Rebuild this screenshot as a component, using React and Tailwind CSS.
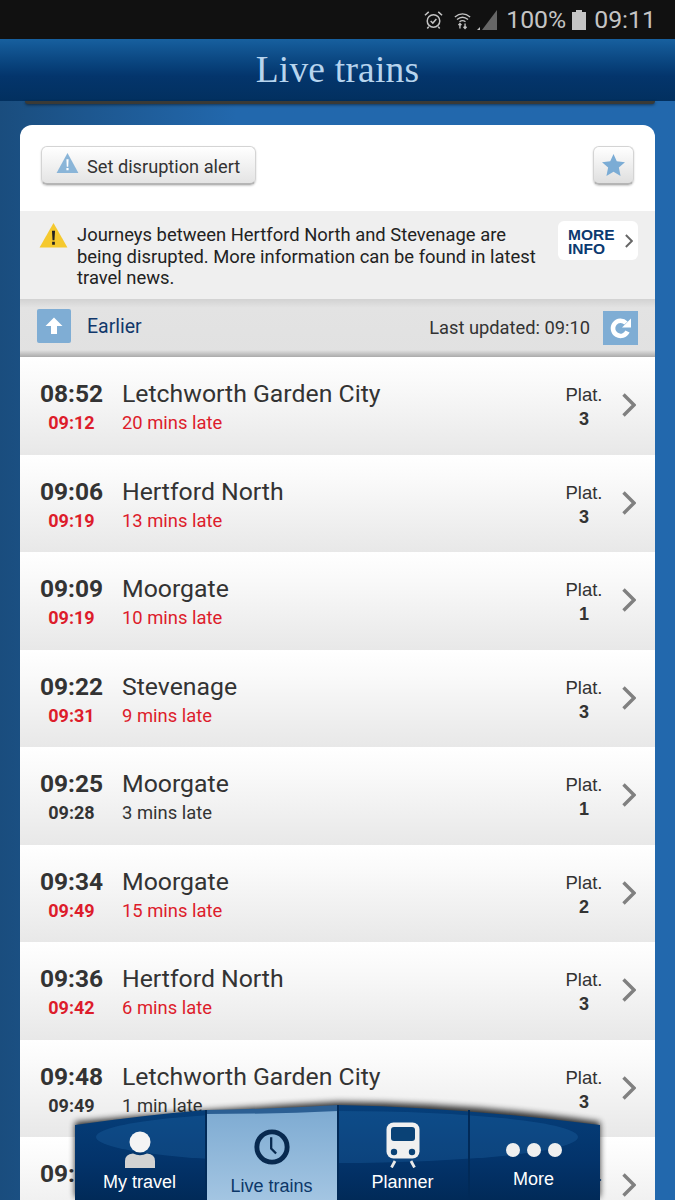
const TRAINS = [
  { sched: '08:52', exp: '09:12', dest: 'Letchworth Garden City', note: '20 mins late', plat: 3, red: true },
  { sched: '09:06', exp: '09:19', dest: 'Hertford North', note: '13 mins late', plat: 3, red: true },
  { sched: '09:09', exp: '09:19', dest: 'Moorgate', note: '10 mins late', plat: 1, red: true },
  { sched: '09:22', exp: '09:31', dest: 'Stevenage', note: '9 mins late', plat: 3, red: true },
  { sched: '09:25', exp: '09:28', dest: 'Moorgate', note: '3 mins late', plat: 1, red: false },
  { sched: '09:34', exp: '09:49', dest: 'Moorgate', note: '15 mins late', plat: 2, red: true },
  { sched: '09:36', exp: '09:42', dest: 'Hertford North', note: '6 mins late', plat: 3, red: true },
  { sched: '09:48', exp: '09:49', dest: 'Letchworth Garden City', note: '1 min late', plat: 3, red: false },
  { sched: '09:52', exp: '', dest: 'Moorgate', note: '', plat: '', red: false },
];

function Chevron({ className }) {
  return (
    <svg viewBox="0 0 14 24" className={className} fill="none" stroke="currentColor" strokeWidth="3.4">
      <path d="M1.5 1.5 L12 12 L1.5 22.5" />
    </svg>
  );
}

function StatusBar() {
  return (
    <div className="h-[39px] bg-[#111111] flex items-center justify-end pr-[19px] text-[#c4c4c4] text-[24.8px] font-['Roboto',sans-serif]">
      {/* alarm */}
      <svg viewBox="0 0 20 20" className="w-[19px] h-[20px] mr-[11px]" fill="none" stroke="currentColor" strokeWidth="1.6">
        <circle cx="10" cy="11" r="6.6" />
        <path d="M7 11 L9.3 13.2 L13 9" />
        <path d="M1 5 L5 1.5 M19 5 L15 1.5 M5 17 L3.5 19 M15 17 L16.5 19" />
      </svg>
      {/* wifi */}
      <svg viewBox="0 0 20 20" className="w-[17px] h-[20px] mr-[6px]" fill="none" stroke="currentColor" strokeWidth="1.6">
        <path d="M1 6.5 Q10 -1 19 6.5 M3.5 9.5 Q10 4 16.5 9.5 M6.5 12 Q10 9.5 13.5 12" />
        <path d="M7 14 V20 M5.2 16 L7 14 L8.8 16 M13 20 V14 M11.2 18 L13 20 L14.8 18" />
      </svg>
      {/* signal */}
      <svg viewBox="0 0 20 20" className="w-[20px] h-[20px] mr-[9px]">
        <path d="M20 0 V20 H5 Z" fill="#666666" />
        <path d="M0 20 L3 17 V20 Z" fill="#c4c4c4" />
      </svg>
      <span className="mr-[6px]">100%</span>
      <span className="w-[14px] h-[20px] mr-[8px] flex flex-col items-center">
        <span className="w-[6px] h-[2px] bg-[#c4c4c4]" />
        <span className="w-[14px] h-[18px] bg-[#c4c4c4]" />
      </span>
      <span>09:11</span>
    </div>
  );
}

function Toolbar() {
  return (
    <div className="h-[86px] flex items-center justify-between pl-[21px] pr-[21px] bg-white rounded-t-[12px]">
      <button className="w-[215px] h-[39px] mt-[-6px] pt-[5px] rounded-[6px] border border-[#d4d4d4] border-b-[2px] border-b-[#b5b5b5] bg-gradient-to-b from-white to-[#e4e4e4] flex items-center pl-[14px] gap-[8px] text-[18.2px] text-[#333333] shadow-[0_1px_2px_rgba(0,0,0,0.2)]">
        <svg viewBox="0 0 24 22" className="w-[23px] h-[20px] mt-[-9px]">
          <path d="M12 0 L24 22 H0 Z" fill="#8ab5d8" />
          <path d="M10.8 7 H13.2 L12.8 15 H11.2 Z M10.8 16.5 H13.2 V19 H10.8 Z" fill="#ffffff" />
        </svg>
        Set disruption alert
      </button>
      <button className="w-[41px] h-[39px] mt-[-6px] rounded-[6px] border border-[#d4d4d4] border-b-[2px] border-b-[#b5b5b5] bg-gradient-to-b from-white to-[#dfdfdf] flex items-center justify-center shadow-[0_1px_2px_rgba(0,0,0,0.2)]">
        <svg viewBox="0 0 24 23" className="w-[23px] h-[22px]">
          <path d="M12 0 L15.4 7.6 L24 8.6 L17.6 14.2 L19.4 23 L12 18.6 L4.6 23 L6.4 14.2 L0 8.6 L8.6 7.6 Z" fill="#7bacd5" />
        </svg>
      </button>
    </div>
  );
}

function Alert() {
  return (
    <div className="h-[88px] bg-[#efefef] relative flex pl-[19px] pt-[13px] pr-[17px]">
      <svg viewBox="0 0 30 26" className="w-[29px] h-[25px] shrink-0 mt-[-1px]">
        <path d="M15 0 L29.5 25.5 H0.5 Z" fill="#f5c92e" strokeLinejoin="round" />
        <path d="M13.4 8 H16.6 L16 18 H14 Z M13.6 19.5 H16.4 V22.5 H13.6 Z" fill="#222222" />
      </svg>
      <p className="ml-[9px] w-[466px] text-[18.4px] leading-[21.5px] text-[#222222] shrink-0">
        Journeys between Hertford North and Stevenage are being disrupted. More information can be found in latest travel news.
      </p>
      <div className="absolute right-[17px] top-[10px] w-[80px] h-[39px] bg-white rounded-[6px] flex items-center pl-[10px] justify-between pr-[5px]">
        <span className="font-['Liberation_Sans',sans-serif] font-bold text-[15.5px] leading-[14px] text-[#0b3a70] mt-[2px]">
          MORE<br />INFO
        </span>
        <Chevron className="w-[8px] h-[14px] text-[#666666]" />
      </div>
    </div>
  );
}

function UpdateBar() {
  return (
    <div className="h-[58px] bg-gradient-to-b from-[#d2d2d2] via-[#e3e3e3] via-[15%] to-[#e1e1e1] flex items-center pl-[17px] pr-[17px] relative">
      <span className="w-[34px] h-[34px] bg-[#7fadd4] rounded-[2px] flex items-center justify-center mt-[-4px]">
        <svg viewBox="0 0 18 18" className="w-[18px] h-[18px]">
          <path d="M9 0.5 L17.5 9 H12 V17 H6 V9 H0.5 Z" fill="#ffffff" strokeLinejoin="round" />
        </svg>
      </span>
      <span className="ml-[16px] text-[19.5px] text-[#12386b] mt-[-3px]">Earlier</span>
      <span className="ml-auto text-[18.3px] text-[#333333] mt-[-1px]">Last updated: 09:10</span>
      <span className="ml-[13px] w-[35px] h-[34px] bg-[#7fadd4] flex items-center justify-center">
        <svg viewBox="0 0 24 24" className="w-[24px] h-[24px]" fill="none">
          <path d="M18.5 15.5 A7.6 7.6 0 1 1 17 7" stroke="#ffffff" strokeWidth="4.6" />
          <path d="M22 2.5 V11.5 H13 Z" fill="#ffffff" />
        </svg>
      </span>
      <div className="absolute left-0 right-0 bottom-0 h-[7px] bg-gradient-to-b from-transparent to-[#aaaaaa]" />
    </div>
  );
}

function TrainRow({ t }) {
  const tone = t.red ? 'text-[#dd1c2b]' : 'text-[#333333]';
  return (
    <div className="h-[97.5px] bg-gradient-to-b from-white via-[#fafafa] via-[25%] to-[#e8e8e8] flex pl-[19px] pr-[19px] pt-[21px] text-[#333333]">
      <div className="w-[65px] flex flex-col items-center">
        <span className="text-[24.5px] leading-[32px] font-bold">{t.sched}</span>
        <span className={`text-[18px] leading-[24px] mt-[1px] font-bold ${tone}`}>{t.exp}</span>
      </div>
      <div className="ml-[18px] flex flex-col">
        <span className="text-[24.8px] leading-[32px]">{t.dest}</span>
        <span className={`text-[18.4px] leading-[24px] mt-[1px] ${tone}`}>{t.note}</span>
      </div>
      <div className="ml-auto w-[40px] flex flex-col items-center mt-[5px] mr-[18px] font-['Liberation_Sans',sans-serif]">
        <span className="text-[18.5px] leading-[24px]">Plat.</span>
        <span className="text-[18px] leading-[24px] font-bold">{t.plat}</span>
      </div>
      <Chevron className="w-[14px] h-[24px] mt-[15px] text-[#808080]" />
    </div>
  );
}

function NavBar() {
  const tab = "w-[131px] flex flex-col items-center font-['Liberation_Sans',sans-serif] text-[18px]";
  return (
    <div className="absolute left-[75px] bottom-0 w-[525px] h-[100px]">
      <svg viewBox="0 0 525 100" className="absolute inset-0 w-full h-full overflow-visible">
        <defs>
          <linearGradient id="navBlue" x1="0" y1="0" x2="0" y2="1">
            <stop offset="0" stopColor="#063f7a" />
            <stop offset="0.6" stopColor="#03336a" />
            <stop offset="1" stopColor="#012a58" />
          </linearGradient>
          <linearGradient id="navLight" x1="0" y1="0" x2="0" y2="1">
            <stop offset="0" stopColor="#7eabd2" />
            <stop offset="1" stopColor="#a3c5e2" />
          </linearGradient>
          <filter id="navShadow" x="-5%" y="-20%" width="110%" height="140%">
            <feGaussianBlur stdDeviation="3" />
          </filter>
        </defs>
        <path d="M0 25 Q130 12 263 5 Q400 6 525 25 V100 H0 Z" fill="#000000" opacity="0.8" transform="translate(0,-3)" filter="url(#navShadow)" />
        <path d="M0 25 Q70 15 131 10 V100 H0 Z M263 5 Q395 8 525 25 V100 H263 Z" fill="url(#navBlue)" />
        <ellipse cx="262" cy="37" rx="241" ry="26" fill="#2f7fc4" opacity="0.22" />
        <path d="M131 13 Q200 13 263 10 V100 H131 Z" fill="url(#navLight)" />
        <path d="M131 10 Q200 9 263 5 V11 Q200 14 131 14 Z" fill="#2c5f93" />
        <path d="M131 10 V100 M263 5 V100 M394 10 V100" stroke="#012a58" strokeWidth="2" />
      </svg>
      <div className="relative flex h-full">
        <div className={`${tab} pt-[31px] pr-[2px] text-white`}>
          <svg viewBox="0 0 32 37" className="w-[32px] h-[37px]">
            <circle cx="16" cy="11" r="10.5" fill="#f4f4f4" />
            <path d="M1 37 V30 Q1 23 9 22.5 Q16 26 23 22.5 Q31 23 31 30 V37 Z" fill="#d2d2d2" />
          </svg>
          <span className="mt-[1px]">My travel</span>
        </div>
        <div className={`${tab} pt-[29px] text-[#0c3768]`}>
          <svg viewBox="0 0 44 44" className="w-[44px] h-[44px]" fill="none">
            <circle cx="22" cy="22" r="18.5" stroke="#08294f" strokeWidth="6" />
            <path d="M21 10 V24 L27 30" stroke="#08294f" strokeWidth="2.8" />
          </svg>
          <span className="mt-[8px]">Live trains</span>
        </div>
        <div className={`${tab} pt-[22px] text-white`}>
          <svg viewBox="0 0 34 46" className="w-[34px] h-[46px]">
            <rect x="0.5" y="0.5" width="33" height="36" rx="7" fill="#f0f0f0" />
            <rect x="5" y="5" width="24" height="14" rx="3" fill="#0a4276" />
            <circle cx="8" cy="30" r="3.2" fill="#0a4276" />
            <circle cx="26" cy="30" r="3.2" fill="#0a4276" />
            <path d="M9 39 L5.5 45.5 M25 39 L28.5 45.5" stroke="#e8e8e8" strokeWidth="2.8" />
          </svg>
          <span className="mt-[1px]">Planner</span>
        </div>
        <div className={`${tab} pt-[43px] text-white`}>
          <div className="flex gap-[7px]">
            <span className="w-[14px] h-[14px] rounded-full bg-[#efefef]" />
            <span className="w-[14px] h-[14px] rounded-full bg-[#efefef]" />
            <span className="w-[14px] h-[14px] rounded-full bg-[#efefef]" />
          </div>
          <span className="mt-[9px]">More</span>
        </div>
      </div>
    </div>
  );
}

export default function App() {
  return (
    <div className="relative w-[675px] h-[1200px] overflow-hidden bg-gradient-to-r from-[#1a4d7e] via-[#2268ad] via-[35%] to-[#2268ad] font-['Roboto',sans-serif]">
      <StatusBar />
      <div className="h-[62px] bg-gradient-to-b from-[#17609f] via-[#04356c] via-[60%] to-[#02305f] flex items-center justify-center">
        <h1 className="font-['Liberation_Serif',serif] text-[37.5px] text-[#b7d4ee] tracking-[0.2px]">Live trains</h1>
      </div>
      <div className="ml-[25px] mr-[20px] h-[3px] bg-[#3a3a36] rounded-b-[3px] shadow-[0_1px_3px_rgba(0,0,0,0.5)]" />
      <div className="mx-[20px] mt-[21px] rounded-t-[12px]">
        <Toolbar />
        <Alert />
        <UpdateBar />
        {TRAINS.map(t => <TrainRow key={t.sched} t={t} />)}
      </div>
      <NavBar />
    </div>
  );
}
